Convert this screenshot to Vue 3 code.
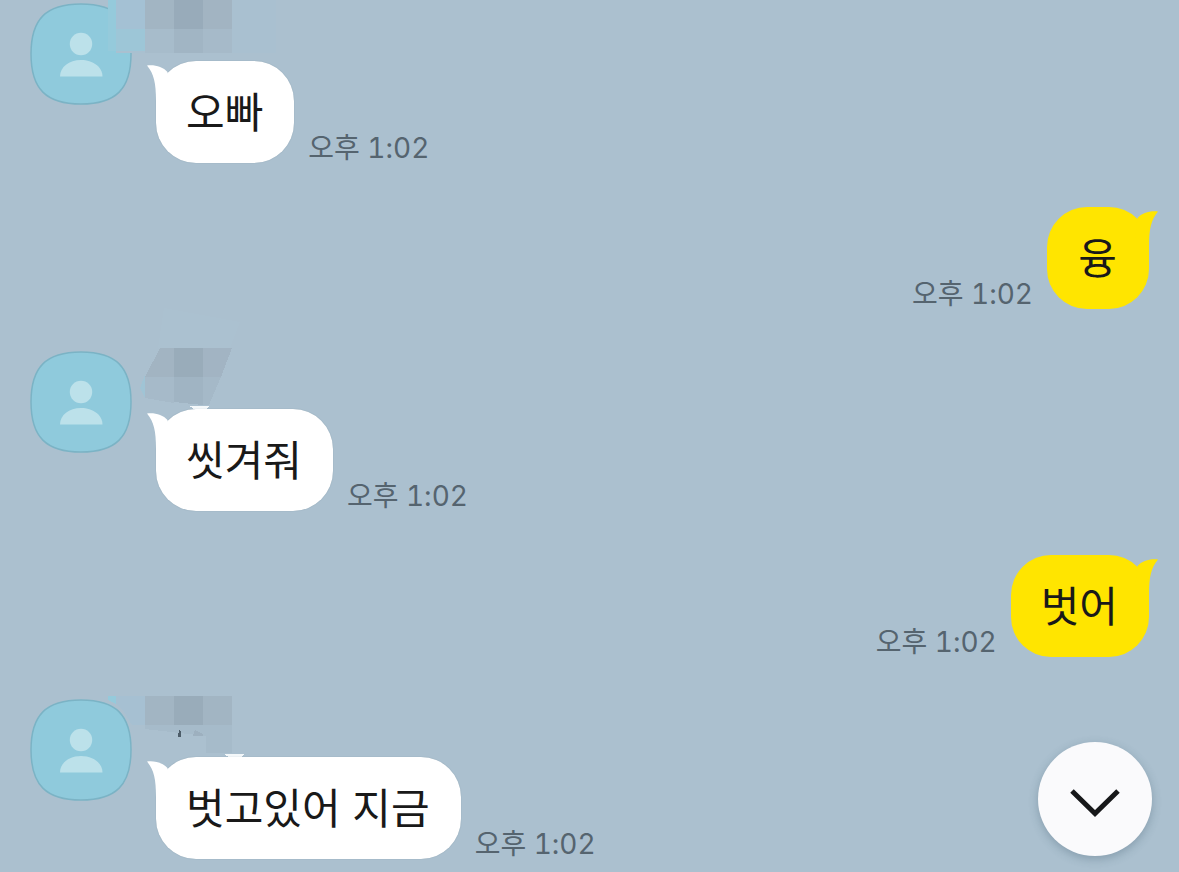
<template>
  <main class="chat">
    <div
      v-for="message in messages"
      :key="message.id"
      class="message"
      :class="message.mine ? 'message--mine' : 'message--other'"
    >
      <svg v-if="!message.mine" class="avatar" viewBox="0 0 102 102" aria-hidden="true">
        <path class="avatar-shape" d="M51 1C86 1 101 16 101 51S86 101 51 101 1 86 1 51 16 1 51 1Z" />
        <circle class="avatar-person" cx="51" cy="41" r="11.2" />
        <path class="avatar-person" d="M30 73.500C30 64 39 57 51 57S72.500 64 72.500 73.500Z" />
      </svg>

      <!-- nickname is hidden behind a mosaic -->
      <svg v-if="message.mask" class="mask" viewBox="0 0 200 70" aria-hidden="true">
        <polygon
          v-for="(piece, index) in message.mask"
          :key="index"
          :points="piece.points"
          :fill="piece.fill"
        />
      </svg>

      <div class="content">
        <div class="bubble">
          <svg class="tail" viewBox="0 0 24 40" aria-hidden="true">
            <path d="M0 4.500C8 3.500 16 6 20.500 11L24 40H9C9 22 7 13 0 4.500Z" />
          </svg>
          <p class="text">{{ message.text }}</p>
        </div>
        <time class="time" datetime="13:02">{{ message.time }}</time>
      </div>
    </div>

    <button class="scroll-button" type="button" aria-label="맨 아래로">
      <svg viewBox="0 0 50 30" aria-hidden="true">
        <path d="M2 3L25 25.500L48 3" />
      </svg>
    </button>
  </main>
</template>

<script setup>
const messages = [
  {
    id: 1,
    mine: false,
    text: '오빠',
    time: '오후 1:02',
    mask: [
      { points: '16,0 176,0 176,53 16,53', fill: '#a9c0d0' },
      { points: '8,0 16,0 16,51 8,51', fill: '#95cadb' },
      { points: '16,0 45,0 45,29 16,29', fill: '#a4c1d4' },
      { points: '16,29 45,29 45,51 16,51', fill: '#9dc6d7' },
      { points: '45,0 74,0 74,29 45,29', fill: '#a2b5c3' },
      { points: '74,0 103,0 103,29 74,29', fill: '#98abba' },
      { points: '103,0 132,0 132,29 103,29', fill: '#a2b4c2' },
      { points: '45,29 74,29 74,53 45,53', fill: '#a7bccb' },
      { points: '74,29 103,29 103,53 74,53', fill: '#a1b5c4' },
      { points: '103,29 132,29 132,53 103,53', fill: '#a6bac9' }
    ]
  },
  { id: 2, mine: true, text: '융', time: '오후 1:02' },
  {
    id: 3,
    mine: false,
    text: '씻겨줘',
    time: '오후 1:02',
    mask: [
      { points: '64,-40 140,-26 130,0 58,0', fill: '#abc1d0' },
      { points: '45,27 45,50 40,40', fill: '#a0c4d5' },
      { points: '60,0 74,0 74,29 45,29', fill: '#a2b4c2' },
      { points: '74,0 103,0 103,29 74,29', fill: '#99acba' },
      { points: '103,0 132,0 121,29 103,29', fill: '#a2b4c3' },
      { points: '45,29 74,29 74,55 45,50', fill: '#a6bac9' },
      { points: '74,29 103,29 103,57 74,54', fill: '#a0b4c3' },
      { points: '103,29 121,29 109,57 103,57', fill: '#a5b9c8' },
      { points: '89,58 109,58 106,62 96,62', fill: '#f4f8fa' }
    ]
  },
  { id: 4, mine: true, text: '벗어', time: '오후 1:02' },
  {
    id: 5,
    mine: false,
    text: '벗고있어 지금',
    time: '오후 1:02',
    mask: [
      { points: '8,0 16,0 16,8 8,4', fill: '#95cadb' },
      { points: '16,0 45,0 45,29 32,29 24,16 16,8', fill: '#a6c0d2' },
      { points: '45,0 74,0 74,29 45,29', fill: '#a2b5c3' },
      { points: '74,0 103,0 103,29 74,29', fill: '#99acba' },
      { points: '103,0 132,0 132,29 103,29', fill: '#a2b5c3' },
      { points: '45,29 132,29 132,57 106,57 106,40 45,33', fill: '#a6bbca' },
      { points: '79,34 81,36 81,41 78,41', fill: '#4d5d69' },
      { points: '95,34 103,38 103,40 93,40', fill: '#9db0bf' },
      { points: '124,58 145,58 140,62 130,62', fill: '#f4f8fa' }
    ]
  }
];
</script>

<style>
body {
  margin: 0;
  background-color: #abc0cf;
}
</style>

<style scoped>
.chat {
  box-sizing: border-box;
  min-height: 100vh;
  padding: 3px 30px 10px;
  overflow: hidden;
  background-color: #abc0cf;
  font-family: Inter, "Noto Sans CJK KR", sans-serif;
}

.message {
  position: relative;
  display: flex;
}

.message--other {
  gap: 24px;
}

.message--mine {
  margin: 44px 0 42px;
}

.avatar {
  flex: none;
  width: 102px;
  height: 102px;
}

.avatar-shape {
  fill: #8fcadc;
  stroke: #7bb3c5;
  stroke-width: 1.5;
}

.avatar-person {
  fill: #bce1ea;
}

.mask {
  position: absolute;
  top: -3px;
  left: 70px;
  width: 200px;
  height: 70px;
  overflow: visible;
  shape-rendering: crispEdges;
}

.content {
  display: flex;
  align-items: flex-end;
  gap: 14px;
}

/* room for the nickname above the bubble */
.message--other .content {
  padding-top: 58px;
}

.message--mine .content {
  flex-direction: row-reverse;
  margin-left: auto;
}

.bubble {
  position: relative;
  box-sizing: border-box;
  min-width: 102px;
  padding: 22px 31px 20px 30px;
  border-radius: 40px;
  background-color: #fff;
  box-shadow: 0 0 1px rgba(60, 90, 110, 0.4);
}

.message--mine .bubble {
  background-color: #ffe500;
  box-shadow: none;
}

.tail {
  position: absolute;
  top: 0;
  left: -9px;
  width: 24px;
  height: 40px;
  fill: #fff;
}

.message--mine .tail {
  right: -9px;
  left: auto;
  fill: #ffe500;
  transform: scaleX(-1);
}

.text {
  position: relative;
  margin: 0;
  color: #191919;
  font-size: 42px;
  line-height: 60px;
  text-align: center;
  white-space: nowrap;
}

.time {
  color: #55646f;
  font-size: 28px;
  font-variant-numeric: tabular-nums;
  line-height: 30px;
  white-space: nowrap;
}

.scroll-button {
  position: fixed;
  right: 27px;
  bottom: 16px;
  display: flex;
  align-items: center;
  justify-content: center;
  width: 114px;
  height: 114px;
  padding: 8px 0 0;
  border: 0;
  border-radius: 50%;
  background-color: #fafafc;
  box-shadow: 0 3px 10px rgba(50, 75, 95, 0.3);
  cursor: pointer;
}

.scroll-button svg {
  width: 50px;
  height: 30px;
  fill: none;
  stroke: #17181a;
  stroke-width: 5;
}
</style>
